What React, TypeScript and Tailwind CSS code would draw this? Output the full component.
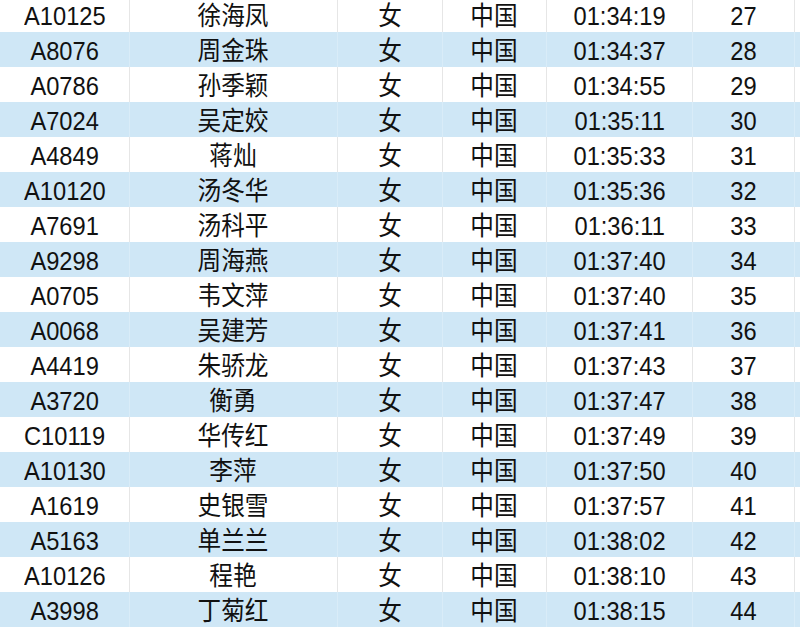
import React from 'react';

const rows: [string, string, string][] = [
  ['A10125', '徐海凤', '01:34:19'],
  ['A8076', '周金珠', '01:34:37'],
  ['A0786', '孙季颖', '01:34:55'],
  ['A7024', '吴定姣', '01:35:11'],
  ['A4849', '蒋灿', '01:35:33'],
  ['A10120', '汤冬华', '01:35:36'],
  ['A7691', '汤科平', '01:36:11'],
  ['A9298', '周海燕', '01:37:40'],
  ['A0705', '韦文萍', '01:37:40'],
  ['A0068', '吴建芳', '01:37:41'],
  ['A4419', '朱骄龙', '01:37:43'],
  ['A3720', '衡勇', '01:37:47'],
  ['C10119', '华传红', '01:37:49'],
  ['A10130', '李萍', '01:37:50'],
  ['A1619', '史银雪', '01:37:57'],
  ['A5163', '单兰兰', '01:38:02'],
  ['A10126', '程艳', '01:38:10'],
  ['A3998', '丁菊红', '01:38:15'],
];

const widths = ['w-[130px]', 'w-[208px]', 'w-[105px]', 'w-[104px]', 'w-[146px]', 'w-[102px]'];

export default function App() {
  return (
    <div
      className="w-[800px] h-[629px] overflow-hidden bg-white text-[26px] leading-[26px] text-[#111111]"
      style={{ fontFamily: '"Liberation Sans", "Noto Sans CJK SC", sans-serif' }}
    >
      <div className="mt-[-3px]">
        {rows.map(([id, name, time], i) => {
          const blue = i % 2 === 1;
          const cells = [id, name, '女', '中国', time, String(27 + i)];
          return (
            <div
              key={id}
              className={`flex h-[35px] ${blue ? 'bg-[#cfe7f6]' : 'bg-white'}`}
            >
              {cells.map((c, j) => (
                <div
                  key={j}
                  className={`${widths[j]} flex items-center justify-center pt-[2px] border-r ${
                    blue ? 'border-[#d9ecf8]' : 'border-[#e6e6e6]'
                  }`}
                >
                  <span className="inline-block scale-x-[0.91] whitespace-nowrap">{c}</span>
                </div>
              ))}
              <div className="flex-1" />
            </div>
          );
        })}
      </div>
    </div>
  );
}
